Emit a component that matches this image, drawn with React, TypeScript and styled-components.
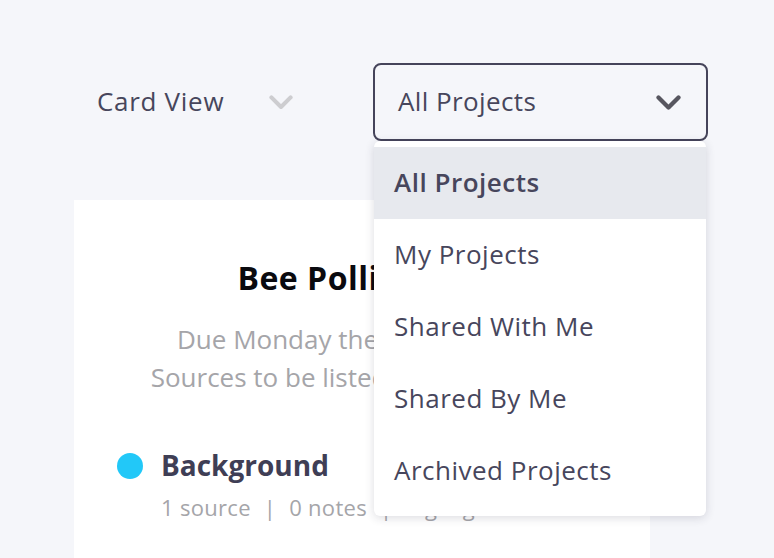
import React, { useState } from 'react'
import styled, { createGlobalStyle } from 'styled-components'

//-----------------------------------------------------------------------------
// Data
//-----------------------------------------------------------------------------
const projectFilters = [
  'All Projects',
  'My Projects',
  'Shared With Me',
  'Shared By Me',
  'Archived Projects'
]

//-----------------------------------------------------------------------------
// Icons
//-----------------------------------------------------------------------------
const Chevron = ({ color, width }: { color: string, width: number }) => (
  <svg width={width} height={width * 0.6} viewBox="0 0 20 12">
    <path d="M2 2 L10 10 L18 2" fill="none" stroke={color} strokeWidth="3.4" strokeLinecap="round" strokeLinejoin="round" />
  </svg>
)

//-----------------------------------------------------------------------------
// Component
//-----------------------------------------------------------------------------
const App = () => {
  const [ activeFilter ] = useState('All Projects')

  return (
    <Page>
      <GlobalStyle />
      <Toolbar>
        <ViewSelect>
          <ViewLabel>Card View</ViewLabel>
          <Chevron color="#cdcdd0" width={24} />
        </ViewSelect>
        <FilterWrapper>
          <FilterBox>
            <FilterLabel>All Projects</FilterLabel>
            <Chevron color="#57565f" width={25} />
          </FilterBox>
          <Menu>
            {projectFilters.map(filter => (
              <MenuItem key={filter} isActive={filter === activeFilter}>
                {filter}
              </MenuItem>
            ))}
          </Menu>
        </FilterWrapper>
      </Toolbar>
      <Card>
        <CardTitle>Bee Pollination</CardTitle>
        <CardDescription>
          Due Monday the 14th at noon.<br/>
          Sources to be listed in MLA format.
        </CardDescription>
        <Section>
          <SectionDot />
          <SectionBody>
            <SectionName>Background</SectionName>
            <SectionStats>
              1 source<Divider>|</Divider>0 notes<Divider>|</Divider>highlights
            </SectionStats>
          </SectionBody>
        </Section>
      </Card>
    </Page>
  )
}

//-----------------------------------------------------------------------------
// Styled Components
//-----------------------------------------------------------------------------
const GlobalStyle = createGlobalStyle`
  * {
    box-sizing: border-box;
  }
  html, body {
    margin: 0;
    padding: 0;
    background-color: #f5f6fa;
    font-family: "Open Sans", Lato, sans-serif;
    overflow: hidden;
  }
`

const Page = styled.div`
  width: 774px;
  height: 558px;
  overflow: hidden;
  background-color: #f5f6fa;
`

const Toolbar = styled.div`
  padding: 63px 0 0 97px;
  display: flex;
  align-items: center;
`

const ViewSelect = styled.div`
  width: 276px;
  display: flex;
  align-items: center;
  gap: 45px;
`

const ViewLabel = styled.div`
  font-size: 26px;
  color: #47465c;
  letter-spacing: 0.7px;
  margin-top: -3px;
`

const FilterWrapper = styled.div`
  position: relative;
`

const FilterBox = styled.div`
  width: 335px;
  height: 78px;
  padding: 0 25px 0 23px;
  border: 2px solid #45445a;
  border-radius: 8px;
  display: flex;
  align-items: center;
  justify-content: space-between;
`

const FilterLabel = styled.div`
  font-size: 26px;
  color: #47465c;
  letter-spacing: 0.4px;
  margin-top: -2px;
`

const Menu = styled.div`
  position: absolute;
  z-index: 10;
  top: 78px;
  left: 1px;
  width: 332px;
  padding: 6px 0 9px;
  background-color: white;
  border-radius: 6px;
  box-shadow: 0 2px 10px rgba(40, 40, 60, 0.16);
`

const MenuItem = styled.div<{ isActive: boolean }>`
  height: 72px;
  padding: 0 0 2px 20px;
  display: flex;
  align-items: center;
  font-size: 26px;
  letter-spacing: 0.5px;
  color: #47465c;
  font-weight: ${({ isActive }) => isActive ? 600 : 400};
  background-color: ${({ isActive }) => isActive ? '#e7e9ee' : 'white'};
`

const Card = styled.div`
  margin: 59px 0 0 74px;
  width: 576px;
  height: 400px;
  padding-top: 56px;
  background-color: white;
`

const CardTitle = styled.div`
  text-align: center;
  font-size: 32px;
  font-weight: 700;
  letter-spacing: 0.5px;
  color: #0a0a0f;
`

const CardDescription = styled.div`
  margin-top: 21px;
  text-align: center;
  font-size: 26px;
  line-height: 38px;
  color: #a5a5a9;
`

const Section = styled.div`
  margin: 50px 0 0 43px;
  display: flex;
  align-items: flex-start;
  gap: 18px;
`

const SectionDot = styled.div`
  margin-top: 7px;
  width: 26px;
  height: 26px;
  border-radius: 50%;
  background-color: #22c8f8;
`

const SectionBody = styled.div`
  display: flex;
  flex-direction: column;
  gap: 8px;
`

const SectionName = styled.div`
  font-size: 28px;
  font-weight: 700;
  color: #3f3e55;
`

const SectionStats = styled.div`
  font-size: 22px;
  letter-spacing: 0.3px;
  color: #a5a5a9;
`

const Divider = styled.span`
  margin: 0 13px;
`

export default App
